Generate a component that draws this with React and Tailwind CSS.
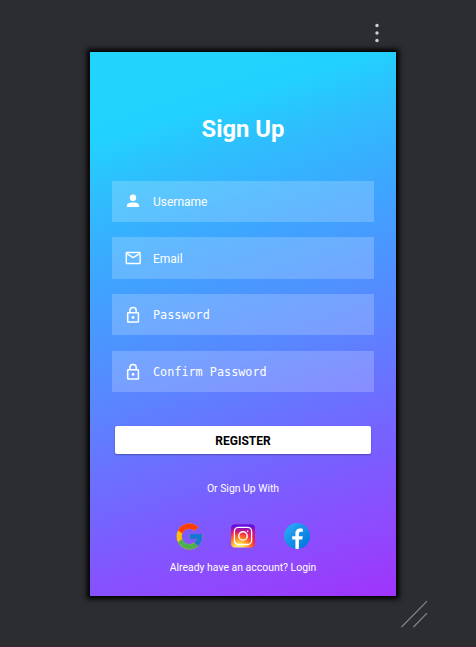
import React from 'react';
import { FcGoogle } from 'react-icons/fc';

function Person() {
  return (
    <svg className="h-[18px] w-[18px] shrink-0" viewBox="0 0 18 18" fill="#fff">
      <circle cx="9" cy="5.700" r="3.200" />
      <path d="M2.900 15v-1.500C2.900 11.400 6 10.600 9 10.600s6.100.8 6.100 2.900V15z" />
    </svg>
  );
}

function Mail() {
  return (
    <svg className="h-[18px] w-[18px] shrink-0" viewBox="0 0 18 18" fill="none" stroke="#fff" strokeWidth="1.400">
      <rect x="2.300" y="3.500" width="13.800" height="11" rx="0.400" />
      <path d="M2.800 4.600 9.200 8.600 15.600 4.600" />
    </svg>
  );
}

function Lock() {
  return (
    <svg className="h-[18px] w-[18px] shrink-0" viewBox="0 0 18 18" fill="none" stroke="#fff" strokeWidth="1.550">
      <rect x="3.700" y="6.700" width="10.700" height="9.300" rx="0.500" />
      <path d="M5.900 6.500V4.600a3.150 3.150 0 0 1 6.300 0v1.900" />
      <circle cx="9.050" cy="11.400" r="1.450" fill="#fff" stroke="none" />
    </svg>
  );
}

const fields = [
  { label: 'Username', Icon: Person },
  { label: 'Email', Icon: Mail },
  { label: 'Password', Icon: Lock, mono: true },
  { label: 'Confirm Password', Icon: Lock, mono: true },
];

function Instagram() {
  return (
    <svg className="h-6 w-6" viewBox="0 0 24 24" fill="none">
      <defs>
        <radialGradient id="igWarm" cx="8" cy="25" r="23" gradientUnits="userSpaceOnUse">
          <stop offset="0" stopColor="#fff3a0" />
          <stop offset="0.25" stopColor="#ffd84a" />
          <stop offset="0.5" stopColor="#ff7a1f" />
          <stop offset="0.75" stopColor="#f0204f" />
          <stop offset="1" stopColor="#d0108a" />
        </radialGradient>
        <linearGradient id="igCool" x1="12" y1="0" x2="12" y2="11" gradientUnits="userSpaceOnUse">
          <stop offset="0" stopColor="#4a10f5" />
          <stop offset="0.25" stopColor="#5a10e8" stopOpacity="0.85" />
          <stop offset="1" stopColor="#c01090" stopOpacity="0" />
        </linearGradient>
      </defs>
      <rect x="0" y="0.5" width="24" height="23" rx="4" fill="url(#igWarm)" />
      <rect x="0" y="0.5" width="24" height="23" rx="4" fill="url(#igCool)" />
      <rect x="3.4" y="3.3" width="17.2" height="17.2" rx="4" stroke="#fff" strokeWidth="1.3" />
      <circle cx="12" cy="11.9" r="4.2" stroke="#fff" strokeWidth="1.4" />
      <circle cx="16.6" cy="7.3" r="0.8" fill="#fff" />
    </svg>
  );
}

function Facebook() {
  return (
    <svg className="h-[26px] w-[26px]" viewBox="0 0 26 26">
      <defs>
        <linearGradient id="fbBlue" x1="4" y1="4" x2="22" y2="23" gradientUnits="userSpaceOnUse">
          <stop offset="0" stopColor="#2aa4f4" />
          <stop offset="1" stopColor="#007ad9" />
        </linearGradient>
      </defs>
      <circle cx="13" cy="13" r="13" fill="url(#fbBlue)" />
      <path
        fill="#fff"
        d="M14.9 16.6h3.3l.6-3.4h-3.900v-1.800c0-1.400.5-2.600 1.800-2.600h2.100v-3c-.4-.1-1.100-.2-2.600-.2-3 0-4.800 1.600-4.800 5.200v2.400H8.200v3.400h3.200v9.250a12.800 12.800 0 0 0 3.500 0z"
      />
    </svg>
  );
}

export default function App() {
  return (
    <div className="relative flex h-[647px] w-[476px] flex-col border-b border-[#33293a] bg-[#2c2d31] pl-[90px] font-['Roboto',sans-serif] text-white">
      <div className="flex h-[52px] shrink-0 justify-end pr-[94px] pt-[22px]">
        <svg className="h-[22px] w-[10px]" viewBox="0 0 10 22" fill="#d0d0d2">
          <circle cx="5" cy="3.500" r="1.700" />
          <circle cx="5" cy="11" r="1.700" />
          <circle cx="5" cy="18.500" r="1.700" />
        </svg>
      </div>

      <main className="flex h-[544px] w-[306px] shrink-0 flex-col items-center bg-[linear-gradient(162deg,#21d4fd_0%,#21d2fe_14%,#2fbdfd_23%,#3fa3ff_37%,#5a85ff_56%,#795fff_76%,#8f49fd_89%,#a033fb_100%)] shadow-[0_0_5px_3px_#000]">
        <h1 className="mt-[61px] text-[23.800px] font-bold leading-8">Sign Up</h1>

        <form className="mt-[35.500px] flex w-[262px] flex-col gap-[15.500px]">
          {fields.map(({ label, Icon, mono }) => (
            <div key={label} className="flex h-[41.300px] items-center gap-[11px] bg-white/20 pl-3">
              <Icon />
              <span
                className={
                  mono
                    ? "mt-px whitespace-pre font-['DejaVu_Sans_Mono',monospace] text-[11.800px] leading-4"
                    : 'mt-[2px] text-[12px] leading-4'
                }
              >
                {label}
              </span>
            </div>
          ))}
        </form>

        <button className="mt-[33.600px] h-[28px] w-[256px] shrink-0 rounded-[2px] bg-white pt-[2px] text-[12px] font-bold leading-4 text-black shadow-[0_1px_2px_rgba(0,0,0,0.3)]">
          REGISTER
        </button>

        <p className="mt-[27.200px] text-[10.400px] leading-4">Or Sign Up With</p>

        <div className="mt-[23.800px] flex h-[31px] w-[138px] items-center">
          <FcGoogle className="h-[31px] w-[31px]" />
          <div className="ml-[26px] flex items-center gap-[28.500px]">
            <Instagram />
            <Facebook />
          </div>
        </div>

        <p className="mt-[8.200px] text-[10.450px] leading-4">Already have an account? Login</p>
      </main>

      <svg className="absolute left-[400px] top-[600px] h-7 w-7" viewBox="0 0 28 28" stroke="#858587" strokeWidth="1.200">
        <path d="M1.500 27 27 1.200M13.500 27 27 13.200" />
      </svg>
    </div>
  );
}
